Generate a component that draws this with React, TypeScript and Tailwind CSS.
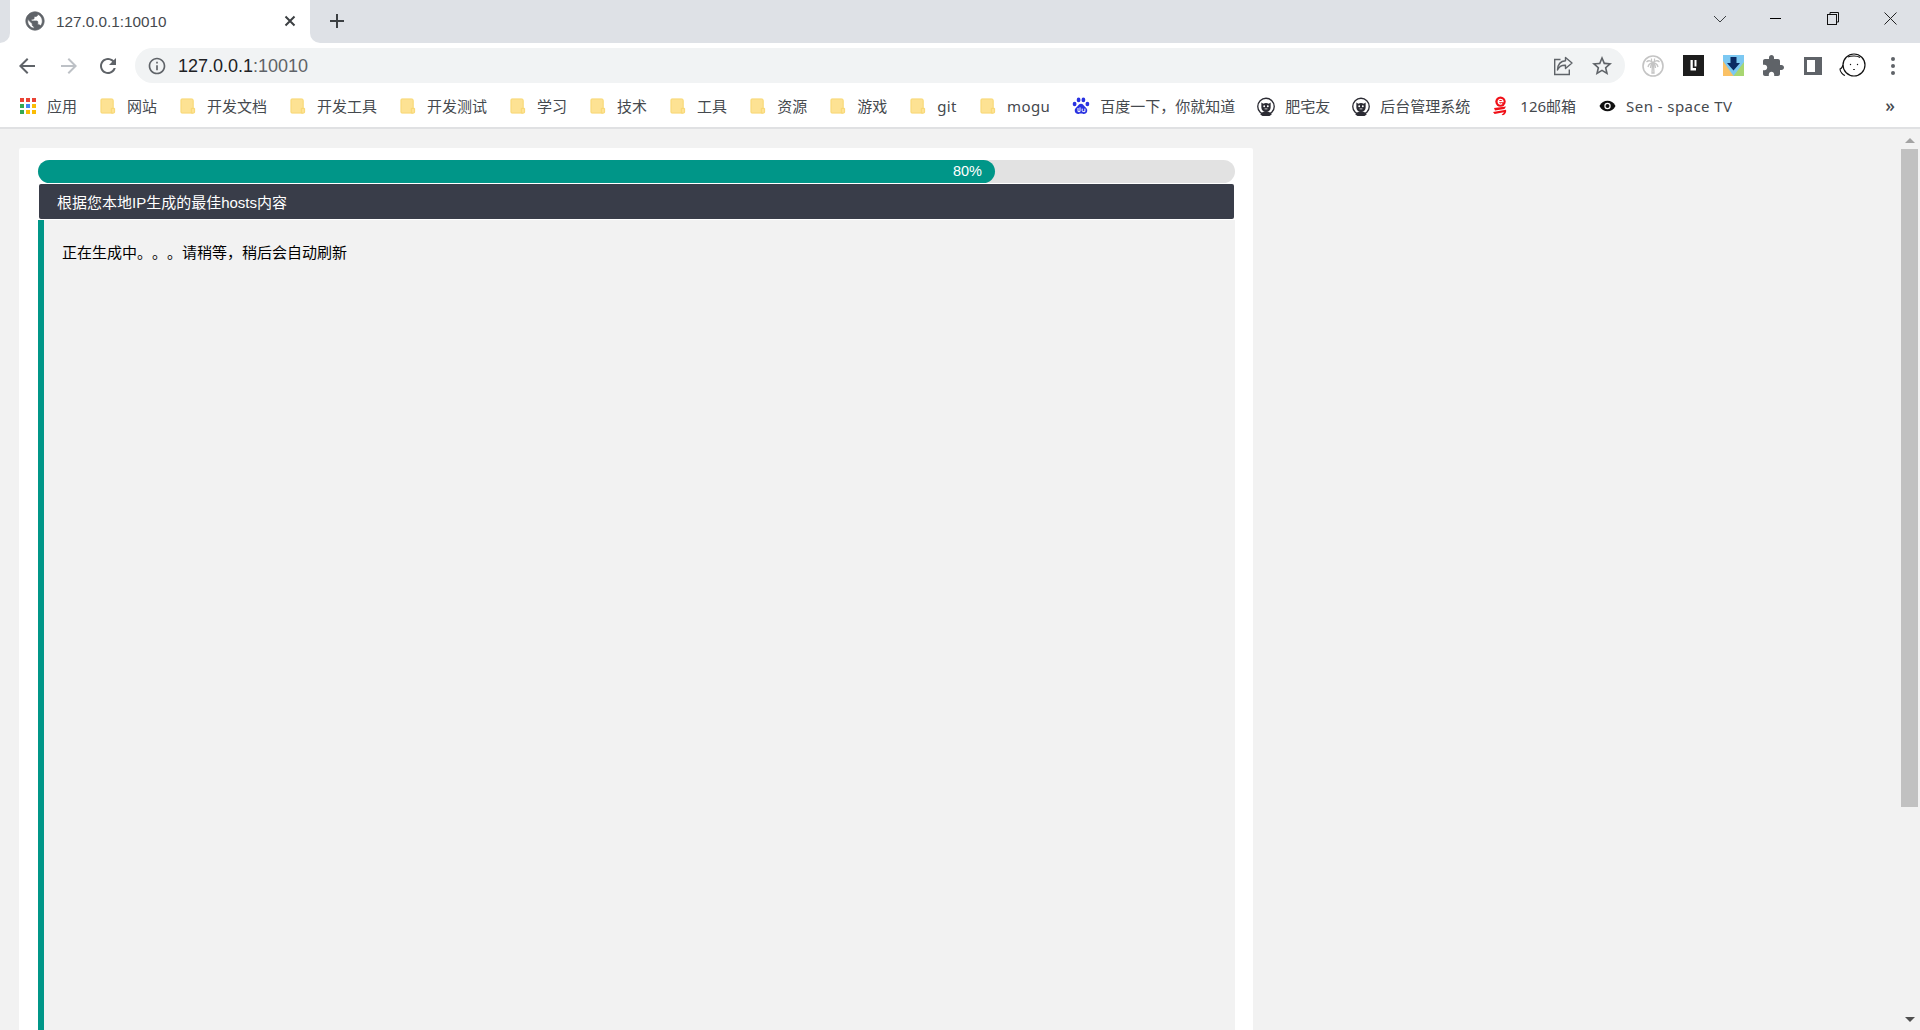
import React from 'react';

const FolderIcon = () => (
  <svg className="ml-[1px]" width="18" height="18" viewBox="0 0 18 18">
    <path d="M2 1.5h10.5a1.5 1.5 0 0 1 1.5 1.5v13.5H2a1 1 0 0 1-1-1V2.5a1 1 0 0 1 1-1z" fill="#fde293" stroke="#f8d66d" />
    <path d="M12 11.5h3.5v4a1 1 0 0 1-1 1H12z" fill="#fde293" stroke="#f8d66d" />
  </svg>
);

const AppsIcon = () => (
  <div className="grid w-[16px] grid-cols-3 gap-[2px]">
    {['#ea4335', '#ea4335', '#ea4335', '#34a853', '#4285f4', '#fbbc04', '#34a853', '#fbbc04', '#fbbc04'].map((c, i) => (
      <div key={i} className="h-[4px] w-[4px]" style={{ backgroundColor: c }} />
    ))}
  </div>
);

const BaiduIcon = () => (
  <svg width="18" height="18" viewBox="0 0 18 18" fill="#2932e1">
    <ellipse cx="6.6" cy="2.9" rx="1.9" ry="2.4" />
    <ellipse cx="11.4" cy="2.9" rx="1.9" ry="2.4" />
    <ellipse cx="2.6" cy="7" rx="1.9" ry="2.3" />
    <ellipse cx="15.4" cy="7" rx="1.9" ry="2.3" />
    <path d="M9 6.8c-2 0-2.6 1.8-4 3-1.4 1.2-2.6 2.4-2.2 4.4.4 2 2.2 2.9 3.8 2.7 1-.1 1.6-.3 2.4-.3s1.4.2 2.4.3c1.6.2 3.4-.7 3.8-2.7.4-2-.8-3.2-2.2-4.4-1.4-1.2-2-3-4-3z" />
    <path d="M6 11v3.6h2M8 10.4v4.2M10.2 11.6v2.2c0 .5.4.8.9.8h1.8v-3" fill="none" stroke="#fff" strokeWidth="1" />
  </svg>
);

const FaceIcon = () => (
  <svg width="19" height="19" viewBox="0 0 19 19">
    <circle cx="9.5" cy="9.5" r="8.7" fill="#fff" stroke="#2b2b33" strokeWidth="1.4" />
    <path d="M4.6 5.2l2 1.4a6 6 0 0 1 5.8 0l2-1.4v5.3a4.9 4.9 0 0 1-9.8 0z" fill="#2b2b33" />
    <path d="M3.5 18c1-2.4 3-3.2 6-3.2s5 .8 6 3.2a9 9 0 0 1-12 0z" fill="#2b2b33" />
    <circle cx="7.6" cy="9.2" r="1" fill="#fff" />
    <circle cx="11.4" cy="9.2" r="1" fill="#fff" />
    <path d="M8 12h3" stroke="#fff" strokeWidth="0.8" />
  </svg>
);

const MailIcon = () => (
  <svg width="18" height="20" viewBox="0 0 18 20">
    <circle cx="8.5" cy="5.6" r="5.2" fill="#f01018" />
    <path d="M6.2 5.6h4.8a2.4 2.4 0 1 0-.8 1.9" fill="none" stroke="#fff" strokeWidth="1.3" />
    <path d="M2 12l12-1.6-1.6 2.6L3 14.6zM1 16l13-2.2c.6 2-.4 5-3.4 5.4l-1-1.2c1.4 0 2-.8 2.2-1.8L2.6 18z" fill="#f01018" />
  </svg>
);

const EyeIcon = () => (
  <svg className="ml-[1px]" width="18" height="12" viewBox="0 0 18 12">
    <path d="M.5 6C2.5 2 5.5.5 9 .5s6.5 1.5 8.5 5.5c-2 4-5 5.500-8.500 5.500S2.500 10 .5 6z" fill="#111" />
    <circle cx="9" cy="6" r="3.4" fill="#fff" />
    <circle cx="9" cy="6" r="2.1" fill="#111" />
  </svg>
);

const bookmarks = [
  { label: '应用', icon: <AppsIcon /> },
  { label: '网站', icon: <FolderIcon /> },
  { label: '开发文档', icon: <FolderIcon /> },
  { label: '开发工具', icon: <FolderIcon /> },
  { label: '开发测试', icon: <FolderIcon /> },
  { label: '学习', icon: <FolderIcon /> },
  { label: '技术', icon: <FolderIcon /> },
  { label: '工具', icon: <FolderIcon /> },
  { label: '资源', icon: <FolderIcon /> },
  { label: '游戏', icon: <FolderIcon /> },
  { label: 'git', icon: <FolderIcon />, latin: true },
  { label: 'mogu', icon: <FolderIcon />, latin: true },
  { label: '百度一下，你就知道', icon: <BaiduIcon /> },
  { label: '肥宅友', icon: <FaceIcon /> },
  { label: '后台管理系统', icon: <FaceIcon /> },
  { label: '126邮箱', icon: <MailIcon /> },
  { label: 'Sen - space TV', icon: <EyeIcon />, latin: true },
];

const MatIcon = ({ d, size = 24, color = '#5f6368', bold = false }: { d: string; size?: number; color?: string; bold?: boolean }) => (
  <svg width={size} height={size} viewBox="0 0 24 24" fill={color} stroke={bold ? color : 'none'} strokeWidth={bold ? 0.8 : 0}>
    <path d={d} />
  </svg>
);

const GLOBE = 'M12 2C6.48 2 2 6.48 2 12s4.48 10 10 10 10-4.48 10-10S17.52 2 12 2zm-1 17.93c-3.95-.49-7-3.85-7-7.93 0-.62.08-1.21.21-1.79L9 15v1c0 1.1.9 2 2 2v1.93zm6.9-2.54c-.26-.81-1-1.39-1.9-1.39h-1v-3c0-.55-.45-1-1-1H8v-2h2c.55 0 1-.45 1-1V7h2c1.1 0 2-.9 2-2v-.41c2.93 1.19 5 4.06 5 7.41 0 2.08-.8 3.97-2.1 5.39z';
const BACK = 'M20 11H7.83l5.59-5.59L12 4l-8 8 8 8 1.41-1.41L7.83 13H20v-2z';
const FORWARD = 'M12 4l-1.41 1.41L16.17 11H4v2h12.17l-5.58 5.59L12 20l8-8z';
const RELOAD = 'M17.65 6.35C16.2 4.9 14.21 4 12 4c-4.42 0-7.99 3.58-7.99 8s3.57 8 7.99 8c3.73 0 6.84-2.55 7.73-6h-2.08c-.82 2.33-3.04 4-5.65 4-3.31 0-6-2.69-6-6s2.69-6 6-6c1.66 0 3.14.69 4.22 1.78L13 11h7V4l-2.35 2.35z';
const INFO = 'M11 7h2v2h-2zm0 4h2v6h-2zm1-9C6.48 2 2 6.48 2 12s4.48 10 10 10 10-4.48 10-10S17.52 2 12 2zm0 18c-4.41 0-8-3.59-8-8s3.59-8 8-8 8 3.59 8 8-3.59 8-8 8z';
const STAR = 'M22 9.24l-7.19-.62L12 2 9.19 8.63 2 9.24l5.46 4.73L5.82 21 12 17.27 18.18 21l-1.63-7.03L22 9.24zM12 15.4l-3.76 2.27 1-4.28-3.32-2.88 4.38-.38L12 6.1l1.71 4.04 4.38.38-3.32 2.88 1 4.28L12 15.4z';
const PUZZLE = 'M20.5 11H19V7c0-1.1-.9-2-2-2h-4V3.5C13 2.12 11.88 1 10.5 1S8 2.12 8 3.5V5H4c-1.1 0-1.99.9-1.99 2v3.8H3.5c1.49 0 2.7 1.21 2.7 2.7s-1.21 2.7-2.7 2.7H2V20c0 1.1.9 2 2 2h3.8v-1.5c0-1.49 1.21-2.7 2.7-2.7 1.49 0 2.7 1.21 2.7 2.7V22H17c1.1 0 2-.9 2-2v-4h1.5c1.38 0 2.5-1.12 2.5-2.5S21.88 11 20.5 11z';

const ShareIcon = () => (
  <svg width="22" height="22" viewBox="0 0 22 22" fill="none" stroke="#5f6368" strokeWidth="1.4">
    <path d="M8.5 4.5H2.7v15h14.6v-5" />
    <path d="M13.5 2.5l6.5 5.5-6.5 5.500v-3.200c-3.800-.2-6.500 1.200-8 4.700.2-5 3-8.800 8-9.200z" strokeLinejoin="round" />
  </svg>
);

const PalmIcon = () => (
  <svg width="22" height="22" viewBox="0 0 22 22" fill="none" stroke="#c4c4c4">
    <circle cx="11" cy="11" r="10" strokeWidth="1.6" />
    <path d="M11 8C9 5.500 6.500 5 4.500 7M11 8c2-2.500 4.500-3 6.500-1M11 8C9.500 6.500 9 5 9.500 3.500M11 8c1.500-1.500 2-3 1.500-4.500M11 8c-3 0-4.500 1.500-5 4M11 8c3 0 4.500 1.500 5 4M11 8c-1.500 1-2.500 2.500-2.500 5M11 8c1.500 1 2.500 2.500 2.500 5M10.500 9h1l.5 9h-2z" strokeWidth="1.3" />
  </svg>
);

const LBoxIcon = () => (
  <svg width="21" height="21" viewBox="0 0 21 21">
    <rect width="21" height="21" fill="#1d1d1d" />
    <path d="M7.5 5h2.3v8H13v2.5H7.5z" fill="#fff" />
    <path d="M11.5 5h2v6.500h-2z" fill="#fff" />
  </svg>
);

const DownloadIcon = () => (
  <svg width="21" height="21" viewBox="0 0 21 21">
    <rect width="21" height="21" fill="#7cc8f2" />
    <path d="M0 6l10.5 15H0z" fill="#fac165" />
    <path d="M21 7v14H10.5z" fill="#a8d672" />
    <path d="M7.5 2h6v6H17l-6.500 7.500L4 8h3.500z" fill="#0b2a63" />
  </svg>
);

const PanelIcon = () => (
  <div className="flex h-[18px] w-[18px] border-[3px] border-[#5f6368]">
    <div className="flex-1 bg-white" />
    <div className="w-[4px] bg-[#5f6368]" />
  </div>
);

const AvatarIcon = () => (
  <svg width="28" height="26" viewBox="0 0 28 26" fill="none" stroke="#111" strokeWidth="1.2">
    <circle cx="15" cy="12" r="11" fill="#fff" />
    <path d="M4 12c-1 3-2 4-3 4 0 3 3 6 5 6.500M9 4c2-1 9-2 12 .5" strokeWidth="1.1" />
    <circle cx="11.5" cy="11.5" r=".7" fill="#111" stroke="none" />
    <circle cx="18.5" cy="11.5" r=".7" fill="#111" stroke="none" />
    <path d="M14 16.5h2" strokeWidth="0.8" />
  </svg>
);

const KebabIcon = () => (
  <div className="flex flex-col gap-[3px]">
    <div className="h-[4px] w-[4px] rounded-full bg-[#5f6368]" />
    <div className="h-[4px] w-[4px] rounded-full bg-[#5f6368]" />
    <div className="h-[4px] w-[4px] rounded-full bg-[#5f6368]" />
  </div>
);

const ToolSlot = ({ children }: { children: React.ReactNode }) => (
  <div className="flex w-[40px] items-center justify-center">{children}</div>
);

export default function App() {
  return (
    <div className="flex h-[1030px] w-[1920px] flex-col overflow-hidden bg-white font-['Liberation_Sans','Noto_Sans_CJK_SC',sans-serif] [text-spacing-trim:space-all]">
      {/* tab strip */}
      <div className="flex h-[43px] bg-white">
        <div className="w-[10px] rounded-br-[10px] bg-[#dee1e6]" />
        <div className="flex w-[300px] items-center rounded-t-[10px] bg-white pb-[1px] pl-[14px]">
          <MatIcon d={GLOBE} size={22} bold />
          <span className="ml-[10px] mt-[2px] text-[15.3px] text-[#45494e]">127.0.0.1:10010</span>
          <svg className="ml-auto mr-[14px]" width="12" height="12" viewBox="0 0 12 12" stroke="#3c4043" strokeWidth="2">
            <path d="M1.5 1.5l9 9M10.5 1.5l-9 9" />
          </svg>
        </div>
        <div className="flex flex-1 items-center rounded-bl-[10px] bg-[#dee1e6] pb-[1px]">
          <svg className="ml-[19px]" width="16" height="16" viewBox="0 0 16 16" stroke="#3c4043" strokeWidth="2">
            <path d="M8 1v14M1 8h14" />
          </svg>
          <div className="mb-[5px] ml-auto mr-[23px] flex items-center">
            <svg width="14" height="8" viewBox="0 0 14 8" fill="none" stroke="#3c4043" strokeWidth="1">
              <path d="M1 1l6 6 6-6" />
            </svg>
            <div className="ml-[43px] h-px w-[11px] bg-black" />
            <svg className="ml-[46px]" width="12" height="13" viewBox="0 0 12 13" fill="none" stroke="#111" strokeWidth="1">
              <rect x=".5" y="2.5" width="9" height="10" />
              <path d="M3 2.5V.5h8.500V10H9.500" />
            </svg>
            <svg className="ml-[45px]" width="13" height="13" viewBox="0 0 13 13" stroke="#222" strokeWidth="1">
              <path d="M.5.5l12 12M12.5.5l-12 12" />
            </svg>
          </div>
        </div>
      </div>

      {/* toolbar */}
      <div className="flex h-[44px] items-start pt-[5px]">
        <div className="flex h-[35px] items-center pl-[15px]">
          <MatIcon d={BACK} />
          <div className="ml-[18px]"><MatIcon d={FORWARD} color="#bdc1c6" /></div>
          <div className="ml-[15px]"><MatIcon d={RELOAD} /></div>
        </div>
        <div className="ml-[15px] flex h-[35px] w-[1490px] items-center rounded-full bg-[#f1f3f4] pl-[12px] pr-[11px]">
          <MatIcon d={INFO} size={20} />
          <span className="ml-[11px] text-[18px] leading-none text-[#202124]">
            127.0.0.1<span className="text-[#5f6368]">:10010</span>
          </span>
          <div className="ml-auto"><ShareIcon /></div>
          <div className="ml-[16px]"><MatIcon d={STAR} /></div>
        </div>
        <div className="ml-[8px] flex h-[35px]">
          <ToolSlot><PalmIcon /></ToolSlot>
          <ToolSlot><LBoxIcon /></ToolSlot>
          <ToolSlot><DownloadIcon /></ToolSlot>
          <ToolSlot><MatIcon d={PUZZLE} /></ToolSlot>
          <ToolSlot><PanelIcon /></ToolSlot>
          <ToolSlot><AvatarIcon /></ToolSlot>
          <ToolSlot><KebabIcon /></ToolSlot>
        </div>
      </div>

      {/* bookmarks bar */}
      <div className="flex h-[42px] items-center gap-[22px] border-b-2 border-[#e0e1e3] pb-[2px] pl-[19px] font-['Noto_Sans','Noto_Sans_CJK_SC',sans-serif] text-[15px] text-[#45494e]">
        {bookmarks.map((b) => (
          <div key={b.label} className="flex items-center gap-[10px] whitespace-nowrap">
            <div className="flex w-[18px] items-center justify-center">{b.icon}</div>
            <span className={b.latin ? 'leading-none tracking-[0.43px]' : 'leading-none'}>{b.label}</span>
          </div>
        ))}
        <span className="mb-[2px] ml-auto mr-[25px] text-[18px] font-medium leading-none">»</span>
      </div>

      {/* page */}
      <div className="flex min-h-0 flex-1 bg-[#f2f2f2]">
        <div className="min-w-0 flex-1 pl-[19px] pt-[19px]">
          <div className="flex h-full w-[1234px] flex-col rounded-t-[2px] bg-white pl-[19px] pr-[18px] pt-[12px]">
            <div className="h-[23px] rounded-full bg-[#e2e2e2]">
              <div className="flex h-full w-[957px] items-center justify-end rounded-full bg-[#009688] pr-[13px] text-[14.5px] text-white">
                80%
              </div>
            </div>
            <div className="mx-px mt-px flex h-[35px] items-center rounded-[2px] bg-[#393d49] pl-[18px] pt-[3px] text-[15px] text-white">
              根据您本地IP生成的最佳hosts内容
            </div>
            <div className="mt-px flex-1 border-l-[6px] border-[#009688] bg-[#f2f2f2] pl-[18px] pt-[22px] text-[15px] leading-[22px] text-black">
              正在生成中。。。请稍等，稍后会自动刷新
            </div>
          </div>
        </div>

        {/* scrollbar */}
        <div className="flex w-[19px] flex-col items-center pr-[2px] pt-[9px]">
          <div className="h-0 w-0 border-x-[5px] border-b-[5px] border-x-transparent border-b-[#a3a3a3]" />
          <div className="mt-[6px] h-[658px] w-[17px] bg-[#c1c1c1]" />
          <div className="mb-[8px] mt-auto h-0 w-0 border-x-[5px] border-t-[5px] border-x-transparent border-t-[#505050]" />
        </div>
      </div>
    </div>
  );
}
